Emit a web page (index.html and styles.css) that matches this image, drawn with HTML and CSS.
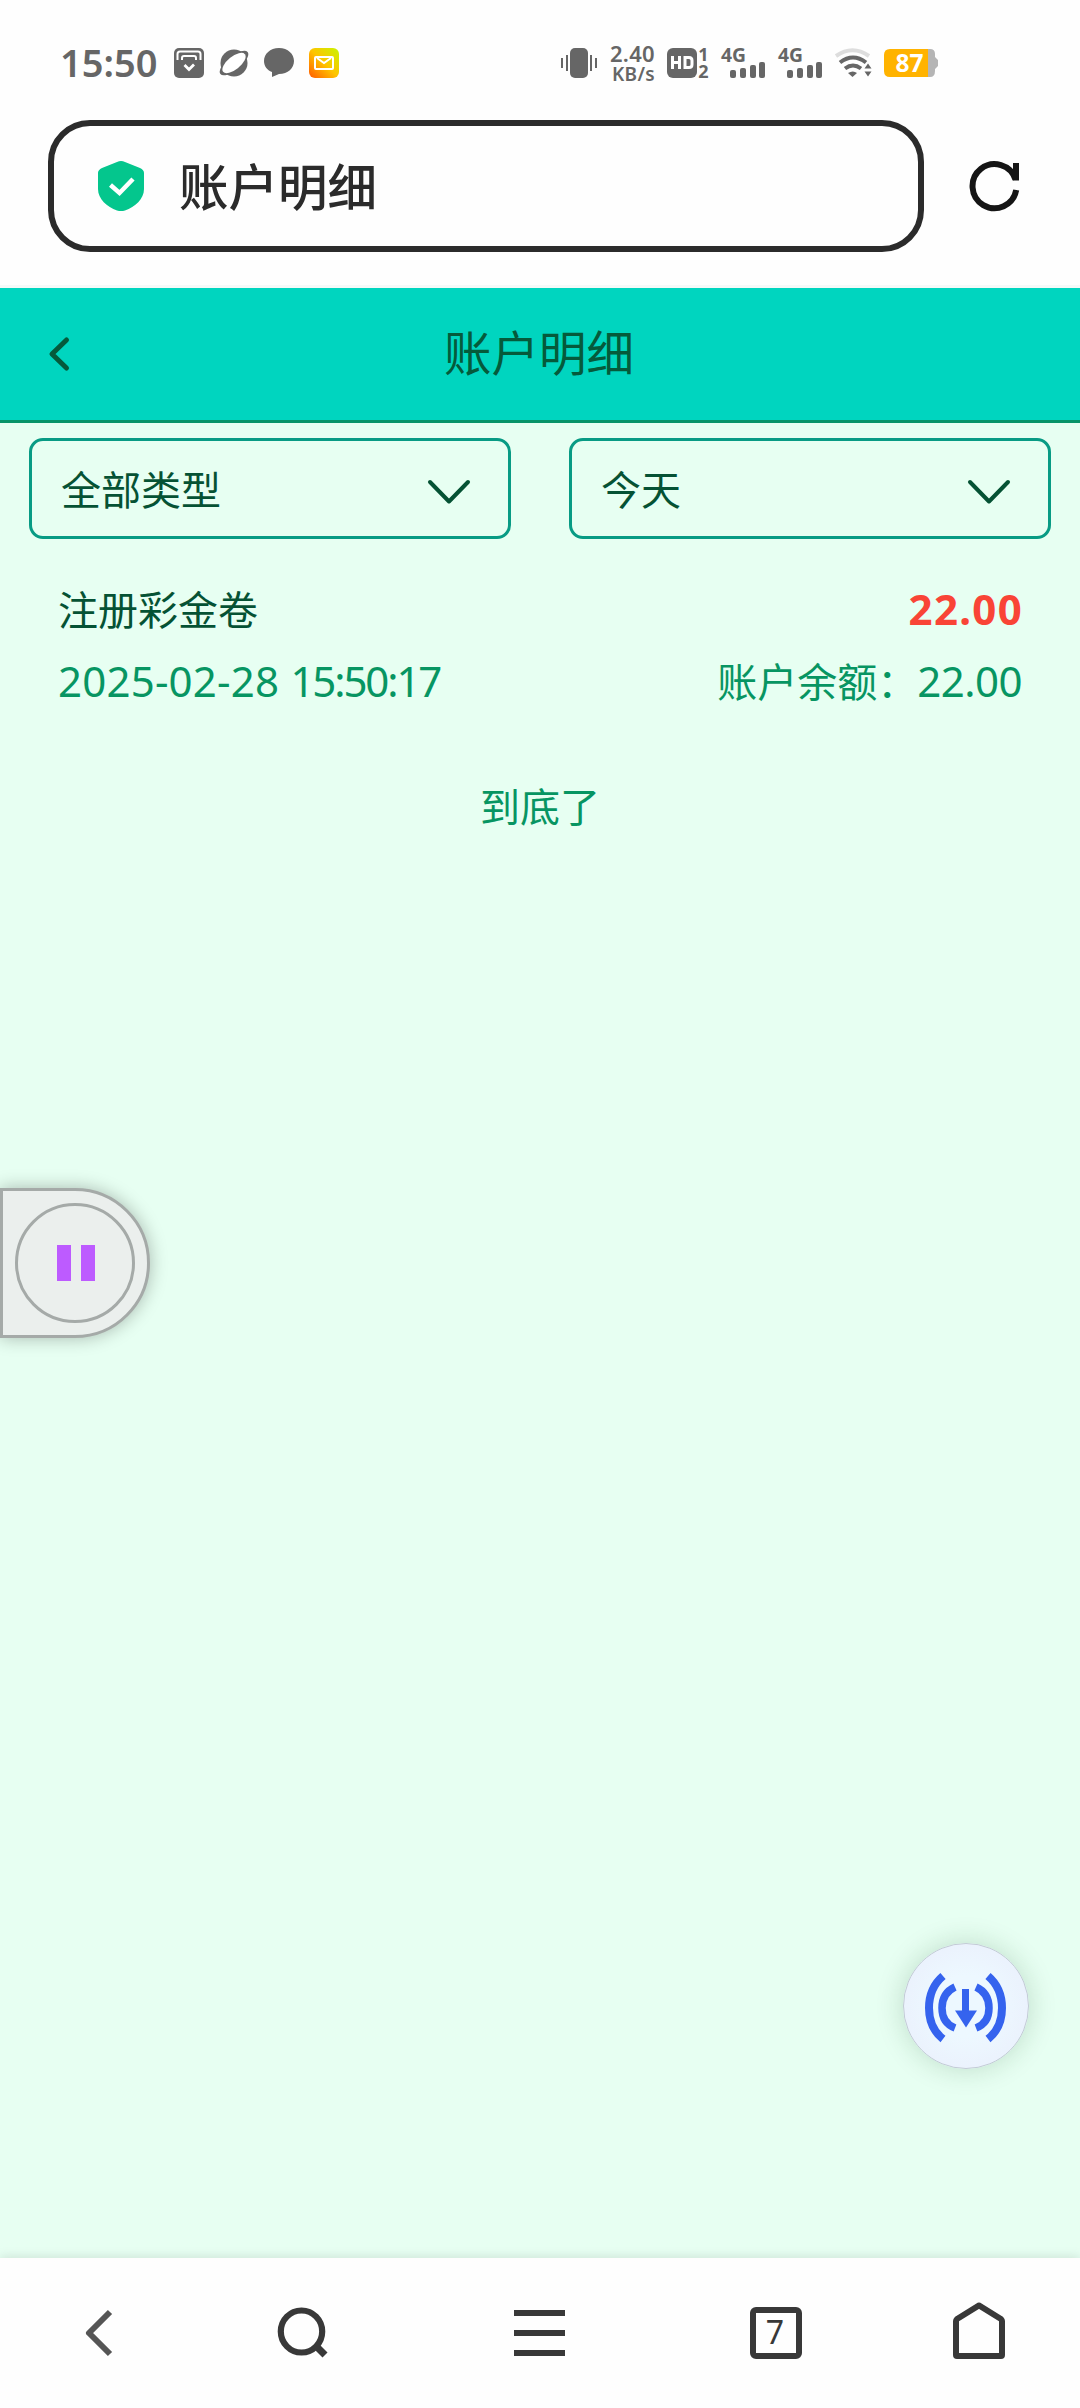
FILE: index.html
```html
<!DOCTYPE html>
<html lang="zh-CN">
<head>
<meta charset="utf-8">
<title>账户明细</title>
<link rel="stylesheet" href="styles.css">
</head>
<body>
<div class="screen">
  <header class="status">
    <div class="status-left">
      <span class="clock">15:50</span>
      <svg class="s-icon" viewBox="0 0 30 30"><rect width="30" height="30" rx="5" fill="#666"/><path d="M3.500 12V6q0-2.500 2.500-2.500h18q2.500 0 2.500 2.500v6M8 12V10q0-2 2-2h10q2 0 2 2v2" fill="none" stroke="#fff" stroke-width="2"/><path d="M10.500 17l4.500 4.500 5-5" fill="none" stroke="#fff" stroke-width="2.800"/></svg>
      <svg class="s-icon" viewBox="0 0 30 30"><circle cx="15" cy="15" r="13.500" fill="#666"/><ellipse cx="15" cy="15" rx="17.500" ry="7" transform="rotate(-39 15 15)" fill="#666"/><ellipse cx="15" cy="15" rx="14" ry="6.500" transform="rotate(-39 15 15)" fill="#fff"/></svg>
      <svg class="s-icon" viewBox="0 0 30 30"><path d="M15 0C6 0 0 6 0 13c0 5 3 9 8 11v5l7-3c9 0 15-6 15-13S24 0 15 0Z" fill="#666"/></svg>
      <svg class="s-icon" viewBox="0 0 30 30"><defs><linearGradient id="mail" x1="0" y1="1" x2="1" y2="0"><stop offset="0" stop-color="#ff5a00"/><stop offset=".5" stop-color="#ffc400"/><stop offset="1" stop-color="#c8f500"/></linearGradient></defs><rect width="30" height="30" rx="6" fill="url(#mail)"/><rect x="6" y="9" width="18" height="12" rx="1" fill="none" stroke="#fff" stroke-width="2"/><path d="M8 10l7 5 7-5" fill="none" stroke="#fff" stroke-width="2"/></svg>
    </div>
    <div class="status-right">
      <svg width="36" height="30" viewBox="0 0 36 30" fill="#666"><rect x="9" width="18" height="30" rx="5"/><rect y="10" width="2" height="10"/><rect x="5" y="7" width="2" height="16"/><rect x="29" y="7" width="2" height="16"/><rect x="34" y="10" width="2" height="10"/></svg>
      <div class="speed"><span>2.40</span><span class="unit">KB/s</span></div>
      <div class="hd">
        <svg width="30" height="30" viewBox="0 0 30 30"><rect width="30" height="30" rx="6" fill="#666"/><path d="M5.500 8v13M12.500 8v13M5.500 14.500h7M18 9.500h4q3 0 3 3v4q0 3-3 3h-4z" fill="none" stroke="#fff" stroke-width="3"/></svg>
        <div class="sims"><span>1</span><span>2</span></div>
      </div>
      <svg width="45" height="32" viewBox="0 0 45 32" fill="#666"><text class="net" x="0" y="15" textLength="25" lengthAdjust="spacingAndGlyphs">4G</text><rect x="9" y="23" width="6" height="8" rx="2"/><rect x="19" y="21" width="6" height="10" rx="2"/><rect x="29" y="18" width="6" height="13" rx="2"/><rect x="38" y="15" width="6" height="16" rx="2"/></svg>
      <svg width="45" height="32" viewBox="0 0 45 32" fill="#666"><text class="net" x="0" y="15" textLength="25" lengthAdjust="spacingAndGlyphs">4G</text><rect x="9" y="23" width="6" height="8" rx="2"/><rect x="19" y="21" width="6" height="10" rx="2"/><rect x="29" y="18" width="6" height="13" rx="2"/><rect x="38" y="15" width="6" height="16" rx="2"/></svg>
      <svg width="37" height="30" viewBox="0 0 37 30" fill="none" stroke="#666" stroke-width="4"><path d="M1 8q16.500-11.500 33 0" stroke="#ddd"/><path d="M5 14.500q13-10 26 0"/><path d="M10 20.500q8-6 16 0"/><path d="M13 25q5-3 9 0l-4.500 4z" fill="#666" stroke="none"/><path d="M29.500 20.500l3.500-5 3.500 5zM29.500 23.500l3.500 5 3.500-5z" fill="#666" stroke="none"/></svg>
      <svg width="55" height="28" viewBox="0 0 55 28"><path d="M40 0h6q5 0 5 5v3l3 3v6l-3 3v2q0 6-5 6h-6z" fill="#b5b5b5"/><path d="M6 0h38v28H6q-6 0-6-6V6q0-6 6-6Z" fill="#ffb300"/><text class="pct" x="11.500" y="23" textLength="28" lengthAdjust="spacingAndGlyphs">87</text></svg>
    </div>
  </header>

  <div class="address">
    <div class="address-box">
      <svg width="46" height="50" viewBox="0 0 46 50"><path d="M19 1q4-2 8 0l15 6q4 2 4 5v16c0 10-9 18-19 21.500q-4 1-8 0C9 46 0 38 0 28V12q0-3 4-5Z" fill="#04c68d"/><path d="M12.500 24l9 8L35 18" fill="none" stroke="#fff" stroke-width="4.500"/></svg>
      <span>账户明细</span>
    </div>
    <svg class="reload" width="50" height="50" viewBox="0 0 50 50" fill="none" stroke="#151515" stroke-width="6"><path d="M45.500 18.500A22 22 0 1 0 46.200 29"/><path d="M46 2v17.500"/></svg>
  </div>

  <div class="title-bar">
    <svg width="20" height="34" viewBox="0 0 20 34"><path d="M17.500 3L3 17l14.500 14" fill="none" stroke="#055a3b" stroke-width="5" stroke-linecap="round" stroke-linejoin="round"/></svg>
    <h1>账户明细</h1>
  </div>

  <main class="content">
    <div class="filters">
      <div class="select"><span>全部类型</span><svg width="42" height="24" viewBox="0 0 42 24"><path d="M2 2l19 19.500L40 2"/></svg></div>
      <div class="select"><span>今天</span><svg width="42" height="24" viewBox="0 0 42 24"><path d="M2 2l19 19.500L40 2"/></svg></div>
    </div>
    <div class="record">
      <div class="line"><span class="name">注册彩金卷</span><b class="amount">22.00</b></div>
      <div class="line muted"><span class="date">2025-02-28 <span class="time">15:50:17</span></span><span class="balance">账户余额：<span class="num">22.00</span></span></div>
    </div>
    <p class="end">到底了</p>
  </main>

  <nav class="toolbar">
    <svg viewBox="0 0 64 64"><path d="M43 11L22 32l21 21" fill="none" stroke="#555" stroke-width="6" stroke-linejoin="round"/></svg>
    <svg viewBox="0 0 64 64" fill="none" stroke="#383838"><ellipse cx="31.500" cy="30.500" rx="20.700" ry="21" stroke-width="6.200"/><path d="M46 45l9 9" stroke-width="7"/></svg>
    <svg viewBox="0 0 64 64" fill="#383838"><path d="M6 9h51v6H6zM6 29h51v6H6zM6 49h51v6H6z"/></svg>
    <svg viewBox="0 0 64 64"><rect x="9" y="9" width="46" height="46" rx="3" fill="none" stroke="#383838" stroke-width="6"/><text class="tabs" x="31" y="43" text-anchor="middle">7</text></svg>
    <svg viewBox="0 0 64 64"><path d="M9 54V20q0-1 1-2L31 5q1-.700 2 0l21 13q1 1 1 2v34q0 1-1 1H10q-1 0-1-1Z" fill="none" stroke="#383838" stroke-width="6"/></svg>
  </nav>

  <div class="float-pause"><div class="ring"><i></i><i></i></div></div>
  <div class="float-down">
    <svg width="125" height="125" viewBox="0 0 125 125" fill="none" stroke="#3563ee" stroke-width="8"><path d="M40 33Q26 45 26 65t14 31M85 33q14 12 14 32T85 96"/><path d="M52 44Q39 50 39 65t13 20M73 44q13 6 13 21T73 85" stroke-width="7.500"/><path d="M62.500 46v24" stroke-width="7"/><path d="M52 67.500h22L63 84.500z" fill="#3563ee" stroke="none"/></svg>
  </div>
</div>
</body>
</html>
```
FILE: styles.css
```css
* { box-sizing: border-box; }
body {
  margin: 0;
  font-family: "Noto Sans", "Noto Sans CJK SC", sans-serif;
}
svg { display: block; flex: none; overflow: visible; }
.screen {
  position: relative;
  display: flex;
  flex-direction: column;
  width: 1080px;
  height: 2408px;
  overflow: hidden;
  background: #e7fff2;
}

/* status bar */
.status {
  display: flex;
  justify-content: space-between;
  height: 120px;
  padding: 6px 141px 0 60px;
  background: #fefefe;
  color: #666;
}
.status-left, .status-right { display: flex; align-items: center; }
.status-left { gap: 15px; }
.clock {
  width: 99px;
  padding-bottom: 2px;
  font-size: 38px;
  font-weight: 600;
  line-height: 52px;
  white-space: nowrap;
}
.s-icon { width: 30px; height: 30px; }
.status-right { gap: 12px; }
.speed {
  display: flex;
  flex-direction: column;
  align-items: flex-end;
  width: 46px;
  font-weight: 600;
  font-size: 22px;
  line-height: 22px;
  white-space: nowrap;
}
.speed span { letter-spacing: 0.300px; }
.speed .unit { font-size: 19px; line-height: 20px; }
.hd { display: flex; align-items: center; gap: 1px; width: 42px; }
.sims {
  display: flex;
  flex-direction: column;
  align-items: center;
  width: 12px;
  font-size: 18px;
  font-weight: 700;
  line-height: 17px;
}
.net { font-size: 20px; font-weight: 700; }
.pct { font-size: 25px; font-weight: 700; fill: #fff; }

/* address bar */
.address {
  display: flex;
  align-items: flex-start;
  gap: 46px;
  height: 168px;
  padding: 0 60px 36px 48px;
  background: #fefefe;
  border-bottom: 3px solid #f5f9f8;
}
.address-box {
  display: flex;
  align-items: center;
  gap: 35px;
  width: 876px;
  height: 132px;
  padding-left: 44px;
  border: 6px solid #2b2b2b;
  border-radius: 42px;
  color: #2b2b2b;
  font: 500 49.500px/60px "Noto Sans CJK SC", sans-serif;
}
.address-box span { padding-bottom: 2px; }
.reload { margin-top: 41px; }

/* page title */
.title-bar {
  display: grid;
  grid-template-columns: 20px 1fr 20px;
  align-items: center;
  height: 135px;
  padding: 0 51px 0 49px;
  background: #00d5bf;
  border-bottom: 3px solid #079468;
}
.title-bar h1 {
  margin: 0;
  padding-bottom: 6px;
  text-align: center;
  color: #055a3b;
  font: 400 47.500px/60px "Noto Sans CJK SC", sans-serif;
}

/* list */
.content { flex: 1; padding: 15px 29px 0; }
.filters { display: grid; grid-template-columns: 1fr 1fr; gap: 58px; }
.select {
  display: flex;
  align-items: center;
  justify-content: space-between;
  height: 101px;
  padding: 0 38px 0 29px;
  border: 3px solid #089b84;
  border-radius: 14px;
  color: #055234;
  font: 400 40px/60px "Noto Sans CJK SC", sans-serif;
}
.select span { padding-bottom: 2px; }
.select svg { margin-top: 6px; }
.select svg path {
  fill: none;
  stroke: #055234;
  stroke-width: 4;
  stroke-linecap: round;
  stroke-linejoin: round;
}
.record { padding: 33px 29px 0; }
.line {
  display: flex;
  align-items: center;
  justify-content: space-between;
  height: 72px;
  color: #055234;
  font: 400 40px/60px "Noto Sans CJK SC", sans-serif;
}
.line.muted { color: #079562; }
.amount, .date, .num { font-family: "Noto Sans", sans-serif; font-size: 42px; }
.amount { padding-top: 2px; color: #f94436; font-weight: 700; letter-spacing: 1.300px; margin-right: -1px; }
.date { padding-top: 2px; letter-spacing: 0.200px; }
.time { letter-spacing: -2.100px; }
.num { letter-spacing: -0.500px; }
.end {
  margin: 59px 0 0;
  text-align: center;
  color: #079562;
  font: 400 40px/60px "Noto Sans CJK SC", sans-serif;
}

/* browser toolbar */
.toolbar {
  display: grid;
  grid-template-columns: 198px 208px 268px 204px 202px;
  place-items: center;
  height: 150px;
  background: #fefefe;
  box-shadow: 0 -2px 10px rgba(0, 0, 0, .1);
}
.toolbar svg { width: 64px; height: 64px; }
.tabs { font-size: 32px; fill: #383838; }

/* floating buttons */
.float-pause {
  position: absolute;
  left: 0;
  top: 1188px;
  width: 150px;
  height: 150px;
  padding: 12px;
  background: #ebefed;
  border: 3px solid #a5aaa8;
  border-radius: 0 75px 75px 0;
  box-shadow: 0 0 18px rgba(0, 0, 0, .28);
}
.ring {
  display: flex;
  align-items: center;
  justify-content: center;
  gap: 10px;
  height: 120px;
  padding-left: 2px;
  border: 3px solid #a5aaa8;
  border-radius: 50%;
}
.ring i { width: 14px; height: 36px; background: #bd5bff; }
.float-down {
  position: absolute;
  left: 903px;
  top: 1943px;
  width: 126px;
  height: 126px;
  border: 1px solid #c3cbd6;
  border-radius: 50%;
  background: radial-gradient(circle, #edf8ff 35%, #e9edfb);
  box-shadow: 0 0 28px rgba(0, 60, 20, .18);
}
.float-down svg { margin: -1px 0 0 -1px; }
```
